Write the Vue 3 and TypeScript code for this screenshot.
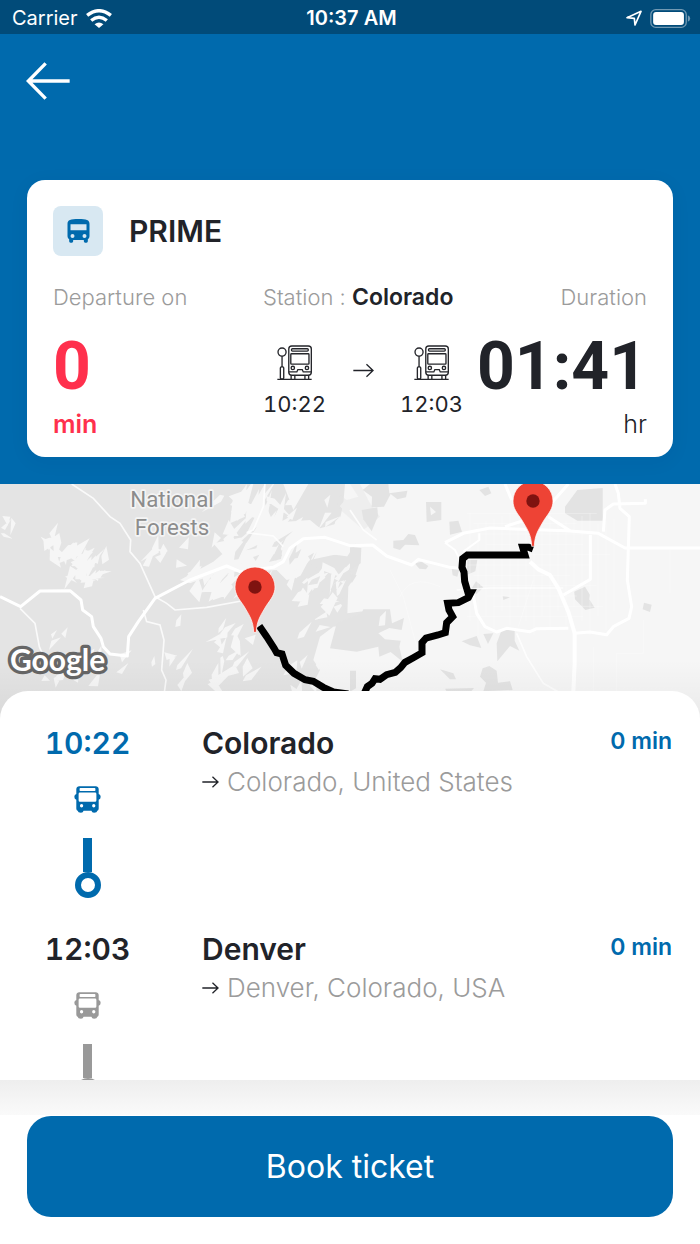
<script setup lang="ts">
interface Stop {
  time: string
  name: string
  address: string
  wait: string
  active: boolean
}

interface Cluster {
  x: number
  y: number
  w: number
  h: number
  count: number
  size: number
}

const stops: Stop[] = [
  { time: '10:22', name: 'Colorado', address: 'Colorado, United States', wait: '0 min', active: true },
  { time: '12:03', name: 'Denver', address: 'Denver, Colorado, USA', wait: '0 min', active: false },
]

// Small repeatable generator, so the terrain is identical on every load.
function createRandom(seed: number): () => number {
  let state = seed
  return () => {
    state = (state * 1664525 + 1013904223) % 4294967296
    return state / 4294967296
  }
}

function buildShards(clusters: Cluster[], seed: number): string {
  const random = createRandom(seed)
  const parts: string[] = []
  for (const c of clusters) {
    for (let i = 0; i < c.count; i++) {
      const x = c.x + random() * c.w
      const y = c.y + random() * c.h
      const angle = random() < 0.75 ? -0.3 - random() * 0.9 : random() * 3
      const length = c.size * (0.35 + random() * random() * 1.3)
      const breadth = c.size * (0.2 + random() * 0.35)
      const spread = 0.9 + random() * 1.2
      const points = [
        [x, y],
        [x + Math.cos(angle) * length, y + Math.sin(angle) * length],
        [x + Math.cos(angle + spread) * breadth, y + Math.sin(angle + spread) * breadth],
      ]
      if (random() < 0.4) {
        points.push([x + Math.cos(angle + 2.6) * breadth, y + Math.sin(angle + 2.6) * breadth])
      }
      parts.push(`M${points.map(([px, py]) => `${Math.round(px)} ${Math.round(py)}`).join('L')}Z`)
    }
  }
  return parts.join('')
}

const clearings = buildShards(
  [
    { x: 0, y: 110, w: 50, h: 50, count: 4, size: 50 },
    { x: 130, y: 150, w: 100, h: 80, count: 14, size: 66 },
    { x: 200, y: 210, w: 110, h: 110, count: 22, size: 66 },
    { x: 440, y: 190, w: 110, h: 60, count: 7, size: 60 },
    { x: 660, y: 40, w: 200, h: 150, count: 30, size: 90 },
    { x: 550, y: 240, w: 240, h: 90, count: 20, size: 84 },
    { x: 850, y: 50, w: 180, h: 100, count: 9, size: 60 },
    { x: 840, y: 260, w: 180, h: 200, count: 20, size: 74 },
    { x: 620, y: 420, w: 120, h: 200, count: 18, size: 66 },
    { x: 860, y: 540, w: 160, h: 130, count: 10, size: 66 },
    { x: 90, y: 450, w: 290, h: 190, count: 14, size: 54 },
    { x: 360, y: 400, w: 190, h: 220, count: 7, size: 50 },
  ],
  41,
)

const thickets = buildShards(
  [
    { x: 880, y: 220, w: 160, h: 120, count: 12, size: 60 },
    { x: 700, y: 170, w: 180, h: 80, count: 9, size: 50 },
  ],
  97,
)

const streets = Array.from({ length: 19 }, (_, i) => 1410 + i * 24)
const avenues = Array.from({ length: 11 }, (_, i) => 100 + i * 31)
</script>

<template>
  <div class="screen">
    <header class="top">
      <div class="status">
        <div class="carrier">
          <span>Carrier</span>
          <svg class="wifi" viewBox="0 0 76 56" aria-hidden="true">
            <g fill="none" stroke="#fff" stroke-width="10">
              <path d="M3 19 Q38 -9 73 19" />
              <path d="M15 34 Q38 15 61 34" />
            </g>
            <path d="M25 45 Q38 34 51 45 L38 56 Z" fill="#fff" />
          </svg>
        </div>
        <strong class="clock">10:37 AM</strong>
        <div class="gauges">
          <svg class="locator" viewBox="0 0 48 48" aria-hidden="true">
            <path d="M3 23 L45 4 L27 45 L25 25 Z" fill="none" stroke="#fff" stroke-width="5" stroke-linejoin="round" />
          </svg>
          <svg class="battery" viewBox="0 0 124 58" aria-hidden="true">
            <rect x="2" y="2" width="108" height="54" rx="15" fill="none" stroke="#7199b3" stroke-width="4" />
            <rect x="9" y="9" width="94" height="40" rx="9" fill="#fff" />
            <path d="M115 19 Q122 22 122 29 Q122 36 115 39 Z" fill="#7199b3" />
          </svg>
        </div>
      </div>

      <nav class="nav">
        <button class="back" type="button" aria-label="Back">
          <svg viewBox="0 0 132 112" aria-hidden="true">
            <path d="M59 3 L7 56 L59 109 M7 56 H131" fill="none" stroke="#fff" stroke-width="10" />
          </svg>
        </button>
      </nav>

      <section class="card">
        <div class="card-head">
          <span class="badge">
            <svg viewBox="0 0 68 72" aria-hidden="true">
              <path
                fill="#006aad"
                fill-rule="evenodd"
                d="M1 14 C1 3 10 0 34 0 C58 0 67 3 67 14 V52 Q67 58 62 61 V67 Q62 71 58 71 H54 Q50 71 50 67 V63 H18 V67 Q18 71 14 71 H10 Q6 71 6 67 V61 Q1 58 1 52 Z M10 16 V34 H58 V16 Z M16 45 A6 6 0 1 0 16 57 A6 6 0 1 0 16 45 Z M52 45 A6 6 0 1 0 52 57 A6 6 0 1 0 52 45 Z"
              />
            </svg>
          </span>
          <h1 class="line-name">PRIME</h1>
        </div>

        <div class="facts">
          <div class="fact departure">
            <span class="label">Departure on</span>
            <span class="big">0</span>
            <span class="unit strong">min</span>
          </div>

          <div class="fact">
            <span class="label">Station : <b>Colorado</b></span>
            <div class="legs">
              <template v-for="(stop, index) in stops" :key="stop.time">
                <svg v-if="index > 0" class="leg-arrow" viewBox="0 0 64 44" aria-hidden="true">
                  <path d="M1 22 H61 M41 3 L61 22 L41 41" fill="none" stroke="#212329" stroke-width="4" />
                </svg>
                <div class="leg">
                  <svg class="halt" viewBox="767 527 104 104" aria-hidden="true">
                    <g fill="none" stroke="#25262b" stroke-width="4">
                      <circle cx="782" cy="548" r="12" />
                      <path d="M782 560 V592" />
                      <rect x="777" y="592" width="10" height="36" rx="3" />
                      <path d="M768 629 H870" />
                      <rect x="802" y="530" width="67" height="87" rx="9" />
                      <rect x="810" y="538" width="50" height="7" rx="3" />
                      <rect x="808" y="553" width="54" height="31" rx="2" />
                      <circle cx="814" cy="595" r="5" />
                      <circle cx="856" cy="595" r="5" />
                      <path d="M802 607 H826 L829 600 H842 L845 607 H869" />
                      <path d="M809 617 V628 M820 617 V628 M850 617 V628 M861 617 V628" />
                    </g>
                  </svg>
                  <span class="leg-time">{{ stop.time }}</span>
                </div>
              </template>
            </div>
          </div>

          <div class="fact duration">
            <span class="label">Duration</span>
            <span class="big">01:41</span>
            <span class="unit">hr</span>
          </div>
        </div>
      </section>
    </header>

    <svg class="map" viewBox="0 12 2100 708" preserveAspectRatio="xMidYMin slice" role="img" aria-label="Route map">
      <defs>
        <linearGradient id="mapShade" x1="0" y1="0" x2="0" y2="1">
          <stop offset="0" stop-color="#000" stop-opacity="0" />
          <stop offset="1" stop-color="#000" stop-opacity="0.05" />
        </linearGradient>
      </defs>

      <rect y="12" width="2100" height="708" fill="#f6f6f6" />
      <path
        fill="#e4e4e4"
        d="M0 12 H1035 L1030 70 L1015 140 L940 150 L900 210 L870 300 L930 240 L1000 225 L1080 215 V245 L1065 290 L1045 320 L1042 400 L1120 390 V420 L1000 440 L960 470 L940 540 L960 570 L940 610 L1030 680 V720 H0 Z"
      />
      <path
        fill="#f6f6f6"
        d="M860 125 L930 120 L960 145 L1050 120 V230 L940 215 L900 290 L860 300 L830 270 L760 275 L700 262 L570 310 L540 300 L640 245 L740 160 Z M640 190 L760 165 L690 250 Z M700 45 L735 110 L690 130 Z M850 12 L925 12 L880 90 Z M790 60 L830 150 L740 160 Z"
      />
      <path :d="clearings" fill="#f6f6f6" />
      <path :d="thickets" fill="#e4e4e4" />

      <g transform="translate(1050 0)" fill="#e3e3e3">
        <path d="M30 12 H0 L25 50 L-10 60 L-30 45 L-40 80 L40 150 L90 110 L60 70 Z" opacity="0.4" />
        <path d="M38 30 L60 12 H115 L118 40 L172 32 L168 52 L142 58 L122 42 L102 80 L65 82 L66 50 Z" />
        <path d="M35 90 L82 82 L84 108 L65 154 L40 118 Z" />
        <path fill-rule="evenodd" d="M228 66 H274 V120 L230 126 Z M240 80 L243 106 L258 96 Z" />
        <path d="M130 182 L160 180 L175 162 L195 165 L208 196 L165 194 L150 210 L130 204 Z" />
        <path d="M298 125 L325 122 L336 155 L300 164 Z" />
        <path d="M388 30 L415 20 L424 40 L405 48 Z" />
        <path d="M645 80 L682 30 L758 24 V122 H682 L645 100 Z" />
        <path d="M352 240 H382 L376 274 L350 285 Z M305 265 L328 268 L322 290 L308 286 Z" />
        <path d="M378 304 L400 322 L380 342 L362 330 Z" />
        <path d="M672 335 L705 320 L720 345 L718 358 L734 383 L706 390 L675 358 Z" />
        <path d="M882 368 L905 374 L900 396 L878 388 Z M458 348 L480 352 L460 360 Z" />
        <path d="M194 250 L215 245 L235 258 L228 268 L208 266 Z" />
        <path
          fill-rule="evenodd"
          d="M-40 430 L35 400 L40 388 H120 L126 430 L162 414 L155 450 L118 444 L85 460 L105 478 L152 482 L148 500 L158 545 L122 516 L88 530 L85 500 L20 515 L-60 505 Z M90 410 L108 392 L105 436 L86 438 Z"
        />
        <path d="M0 200 L34 204 L32 250 L0 270 Z M0 282 L20 286 L5 310 Z" />
        <path d="M335 484 L380 468 L394 504 L360 496 Z M400 462 L430 460 L414 492 Z" />
        <path d="M440 490 L455 450 L494 448 V482 L508 512 L480 498 L442 544 Z" />
        <path d="M390 590 L398 565 L418 558 L440 572 L444 608 L480 604 L488 630 L400 634 L408 608 Z" />
        <path d="M270 568 L310 580 L318 598 L300 598 Z M285 626 L372 624 L350 650 L300 650 Z" />
        <path d="M0 572 H18 V625 L0 635 Z" />
      </g>

      <g fill="none" stroke="#fff">
        <g stroke-width="2" opacity="0.5">
          <path v-for="x in streets" :key="'s' + x" :d="`M${x} ${100 + (x % 5) * 8} V${380 + (x % 7) * 14}`" />
          <path v-for="y in avenues" :key="'a' + y" :d="`M${1400 + (y % 5) * 20} ${y} H${1830 - (y % 7) * 20}`" />
          <path d="M1200 350 Q1230 280 1320 320 M1250 500 L1210 350 L1170 270 M1600 300 L1555 440 M1850 570 V640 M1930 420 V520 H1850 V570 M2010 200 V340 M1780 500 V640" />
        </g>
        <g stroke-width="5" stroke-opacity="0.8">
          <path d="M215 12 L280 55 L330 110 L360 130 L392 180 L390 215 L420 250 L465 350 L500 370 L525 390 L620 382 L740 360 L790 380" />
          <path d="M60 385 L105 430 L118 500 L135 540 M430 390 L440 425 L480 435 L492 480 L485 570 L498 600 L490 660" />
          <path d="M795 12 L790 80 L760 150 L740 158 L820 168 L850 200 M1050 90 L1090 150 L1130 180" />
          <path d="M1370 330 L1470 324 L1690 324 M1550 460 L1580 530 L1630 610 L1700 650" />
        </g>
        <g stroke-width="9" stroke-linejoin="round">
          <path d="M0 350 L62 380 L120 333 L210 332 L243 360 L248 390 L275 410 L280 440 L303 475 L310 500 L330 522 L382 528 L386 470 L415 425 L465 355 L570 300 L680 258 L720 275 L820 262 L850 245 L870 205 L910 176 L975 172 L1050 197 L1118 195 L1160 228 L1235 255 L1255 238 L1350 262 L1375 265" />
          <path d="M1335 188 L1390 160 L1470 144 L1700 152 L1795 160 L1875 204 H2100" />
          <path d="M1335 188 L1365 210 L1395 270 M1390 215 L1438 180 V160" stroke-width="6" />
          <path d="M1515 12 L1535 60 M1705 12 L1645 80 L1600 112 L1515 140 M1645 110 L1710 152" />
          <path d="M1590 245 L1615 268 L1650 285 L1675 325 L1705 395 L1724 460 V550 L1716 720" stroke-width="12" />
          <path d="M1420 345 L1430 400 L1455 440 L1490 456 L1520 445 L1590 455 L1610 446 L1705 445 M1724 460 L1770 456 L1820 464 L1840 440 L1887 415 L1895 380 L1882 300 L1888 110 L1860 85 L1855 40 L1845 12 M1810 155 L1815 90 L1840 72 L1936 70 V58" />
          <path d="M1771 165 V298 L1690 345" />
        </g>
      </g>

      <g fill="none" stroke="#000" stroke-width="21">
        <path d="M778 438 L800 470 L822 504 L830 518 L846 522 L857 556 L882 580 L915 599 L940 604 L970 622 L1000 636 L1045 642" />
        <path d="M1599 207 L1586 202 H1568 L1575 225 H1402 L1388 236 L1386 262 L1392 276 L1394 304 L1404 338 L1413 338 L1405 353 L1375 368 L1343 370 L1347 390 L1358 410 L1340 428 L1336 458 L1314 465 L1278 474 L1266 488 L1266 518 L1240 533 L1215 547 L1202 563 L1186 577 L1160 584 L1140 598 L1125 596 L1116 610 L1102 620 L1092 642" />
      </g>

      <g v-for="pin in [{ x: 765, y: 321 }, { x: 1599, y: 63 }]" :key="pin.x" :transform="`translate(${pin.x} ${pin.y})`">
        <path d="M-4 136 C-5 100 -18 84 -34 56 C-48 36 -60 22 -60 0 A60 60 0 0 1 60 0 C60 22 48 36 34 56 C18 84 5 100 4 136 Z" fill="#ee4335" stroke="#fff" stroke-width="3" stroke-opacity="0.7" />
        <circle r="20" fill="#7f1310" />
      </g>

      <g class="place" text-anchor="middle">
        <text x="516" y="80">National</text>
        <text x="516" y="164">Forests</text>
      </g>
      <text class="brand" x="30" y="572">Google</text>
      <rect y="540" width="2100" height="180" fill="url(#mapShade)" />
    </svg>

    <main class="sheet">
      <ol class="stops">
        <li v-for="stop in stops" :key="stop.name" class="stop" :class="{ active: stop.active }">
          <div class="track">
            <time class="stop-time">{{ stop.time }}</time>
            <svg class="bus" viewBox="0 0 82 82" aria-hidden="true">
              <path
                fill="currentColor"
                fill-rule="evenodd"
                d="M16 1 H66 Q74 1 75 9 V24 Q81 26 81 33 Q81 40 75 42 V68 Q75 73 71 75 Q70 81 61 81 Q54 81 53 75 H29 Q28 81 21 81 Q12 81 11 75 Q7 73 7 68 V42 Q1 40 1 33 Q1 26 7 24 V9 Q8 1 16 1 Z M19 6 Q17 6 17 9 V13 Q17 15 19 15 H63 Q65 15 65 13 V9 Q65 6 63 6 Z M18 20 Q14 20 14 24 V43 Q14 48 18 48 H64 Q68 48 68 43 V24 Q68 20 64 20 Z M23 55 A5 5 0 1 0 23 65 A5 5 0 1 0 23 55 Z M60 55 A5 5 0 1 0 60 65 A5 5 0 1 0 60 55 Z"
              />
            </svg>
            <span class="rail"></span>
            <span class="ring"></span>
          </div>
          <div class="place-info">
            <h2 class="stop-name">{{ stop.name }}</h2>
            <p class="address">
              <svg viewBox="0 0 52 36" aria-hidden="true">
                <path d="M1 18 H49 M32 2 L49 18 L32 34" fill="none" stroke="#212329" stroke-width="4" />
              </svg>
              <span>{{ stop.address }}</span>
            </p>
          </div>
          <span class="wait">{{ stop.wait }}</span>
        </li>
      </ol>
    </main>

    <footer class="footer">
      <button class="book" type="button">Book ticket</button>
    </footer>
  </div>
</template>

<style>
html,
body {
  margin: 0;
  background: #fff;
}
</style>

<style scoped>
.screen {
  display: flex;
  flex-direction: column;
  height: 100vh;
  overflow: hidden;
  background: #fff;
  color: #212329;
  font-family: Inter, "Liberation Sans", sans-serif;
}

svg {
  display: block;
  flex: none;
}

button {
  border: 0;
  padding: 0;
  font-family: inherit;
  cursor: pointer;
}

.top {
  flex: none;
  background: #006aad;
  padding-bottom: 27px;
}

.status {
  display: grid;
  grid-template-columns: 1fr auto 1fr;
  align-items: center;
  height: 34px;
  padding: 0 9px 0 12px;
  background: #014b79;
  color: #fff;
  font-size: 20px;
  line-height: 36px;
}

.carrier,
.gauges {
  display: flex;
  align-items: center;
  gap: 8px;
}

.gauges {
  justify-content: flex-end;
}

.clock {
  font-weight: 600;
}

.wifi {
  width: 26px;
  height: 19px;
}

.locator {
  width: 16px;
  height: 16px;
}

.battery {
  width: 41px;
  height: 19px;
}

.nav {
  padding: 28px 26px 80px;
}

.back {
  display: block;
  background: none;
}

.back svg {
  width: 44px;
  height: 38px;
}

.card {
  margin: 0 27px;
  padding: 26px 26px 19px;
  border-radius: 18px;
  background: #fff;
  box-shadow: 0 4px 20px rgba(0, 40, 80, 0.06);
}

.card-head {
  display: flex;
  align-items: center;
  gap: 26px;
}

.badge {
  display: grid;
  place-items: center;
  width: 50px;
  height: 50px;
  border-radius: 8px;
  background: #d8e8f2;
}

.badge svg {
  width: 23px;
  height: 24px;
}

.line-name {
  margin: 0;
  font-size: 30px;
  font-weight: 600;
  line-height: 36px;
}

.facts {
  display: grid;
  grid-template-columns: 210fr 200fr 184fr;
  margin-top: 27px;
}

.fact {
  display: flex;
  flex-direction: column;
  align-items: flex-start;
}

.label {
  color: #9b9b9b;
  font-size: 22px;
  font-weight: 300;
  line-height: 28px;
  white-space: nowrap;
}

.label b {
  color: #212329;
  font-size: 23px;
  font-weight: 600;
}

.big {
  margin-top: 24px;
  font-family: Roboto, Inter, sans-serif;
  font-size: 66px;
  font-weight: 700;
  line-height: 64px;
}

.unit {
  margin-top: 11px;
  font-size: 25px;
  font-weight: 300;
  line-height: 28px;
}

.departure .big,
.departure .unit {
  color: #ff304d;
}

.unit.strong {
  font-weight: 600;
}

.duration {
  align-items: flex-end;
}

.legs {
  display: flex;
  align-items: flex-start;
  align-self: stretch;
  justify-content: space-between;
  margin-top: 34px;
}

.leg {
  display: flex;
  flex-direction: column;
  align-items: center;
  gap: 10px;
}

.halt {
  width: 35px;
  height: 35px;
}

.leg-arrow {
  width: 21px;
  height: 15px;
  margin-top: 18px;
}

.leg-time {
  font-size: 22px;
  font-variant-numeric: tabular-nums;
  line-height: 28px;
}

.map {
  width: 100%;
  height: 236px;
}

.place {
  fill: #8c8c8c;
  stroke: #f4f4f4;
  stroke-width: 10px;
  stroke-linejoin: round;
  paint-order: stroke;
  font-family: Roboto, sans-serif;
  font-size: 67px;
}

.brand {
  fill: #fff;
  stroke: #666;
  stroke-width: 20px;
  stroke-linejoin: round;
  paint-order: stroke;
  font-family: Lato, sans-serif;
  font-size: 90px;
  font-weight: 700;
}

.sheet {
  position: relative;
  flex: 1;
  min-height: 0;
  margin-top: -29px;
  overflow: hidden;
  border-radius: 28px 28px 0 0;
  background: #fff;
}

.stops {
  margin: 0;
  padding: 34px 28px 0;
  list-style: none;
}

.stop {
  display: grid;
  grid-template-columns: 119px 1fr auto;
  column-gap: 55px;
  align-items: start;
  color: #999;
}

.stop.active {
  color: #006aad;
}

.track {
  display: flex;
  flex-direction: column;
  align-items: center;
  height: 206px;
}

.stop-time {
  color: #212329;
  font-size: 30px;
  font-variant-numeric: tabular-nums;
  font-weight: 600;
  line-height: 36px;
}

.active .stop-time {
  color: inherit;
}

.bus {
  width: 27px;
  height: 27px;
  margin-top: 25px;
}

.rail {
  width: 9px;
  height: 34px;
  margin-top: 25px;
  background: currentColor;
}

.ring {
  box-sizing: border-box;
  width: 26px;
  height: 26px;
  border: 6px solid currentColor;
  border-radius: 50%;
}

.stop-name {
  margin: 0;
  color: #212329;
  font-size: 30px;
  font-weight: 600;
  line-height: 36px;
}

.address {
  display: flex;
  align-items: center;
  gap: 8px;
  margin: 4px 0 0;
  color: #9b9b9b;
  font-size: 26px;
  font-weight: 300;
  line-height: 34px;
  white-space: nowrap;
}

.address svg {
  width: 17px;
  height: 12px;
}

.wait {
  color: #006aad;
  font-size: 23px;
  font-weight: 600;
  line-height: 32px;
}

.footer {
  flex: none;
  padding: 36px 27px 27px;
  background: linear-gradient(#eee, #fafafa 35px, #fff 35px);
}

.book {
  display: block;
  width: 100%;
  border-radius: 24px;
  background: #006aad;
  color: #fff;
  font-size: 32px;
  font-weight: 400;
  line-height: 101px;
}
</style>
